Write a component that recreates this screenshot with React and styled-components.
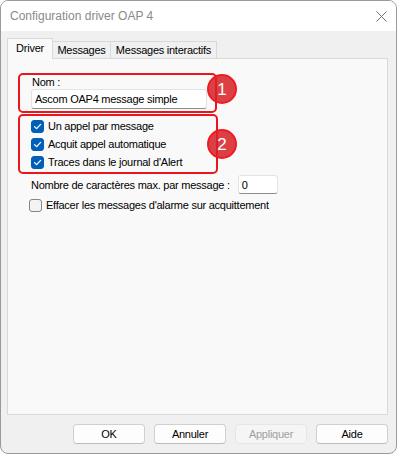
import React from "react";
import styled, { createGlobalStyle } from "styled-components";

const Global = createGlobalStyle`
  html, body { margin: 0; padding: 0; background: #ffffff; }
  body { font-family: "Liberation Sans", Arial, sans-serif; font-size: 11px; letter-spacing: -0.25px; color: #000; }
  * { box-sizing: border-box; }
`;

const Window = styled.div`
  width: 397px;
  height: 454px;
  border: 1px solid #9a9a9a;
  border-radius: 8px;
  overflow: hidden;
  display: flex;
  flex-direction: column;
  background: #f0f0f0;
`;

const TitleBar = styled.div`
  height: 30px;
  background: #ffffff;
  display: flex;
  align-items: center;
  justify-content: space-between;
  padding: 0 9px 0 9px;
`;

const Title = styled.span`
  color: #8a8a8a;
  font-size: 12px;
  letter-spacing: 0;
  padding-bottom: 1px;
`;

const Body = styled.div`
  flex: 1;
  display: flex;
  flex-direction: column;
  padding: 7px 8px 9px 6px;
`;

const TabRow = styled.div`
  display: flex;
  align-items: flex-end;
  height: 20px;
  position: relative;
  z-index: 1;
`;

const Tab = styled.div`
  height: ${(p) => (p.$active ? "21px" : "17px")};
  margin-bottom: ${(p) => (p.$active ? "-1px" : "0")};
  width: ${(p) => p.$w}px;
  margin-left: ${(p) => (p.$first ? "0" : "-1px")};
  border: 1px solid #d9d9d9;
  border-bottom: none;
  background: ${(p) => (p.$active ? "#f9f9f9" : "#f0f0f0")};
  display: flex;
  align-items: ${(p) => (p.$active ? "flex-start" : "center")};
  padding-top: ${(p) => (p.$active ? "3px" : "0")};
  justify-content: center;
  white-space: nowrap;
`;

const Panel = styled.div`
  flex: 1;
  background: #f9f9f9;
  border: 1px solid #d9d9d9;
  display: flex;
  flex-direction: column;
  padding: 14px 0 0 10px;
`;

const Annot = styled.div`
  position: relative;
  width: ${(p) => p.$w}px;
  border: 2px solid #e8171d;
  border-radius: 5px;
  margin-top: ${(p) => p.$mt || 0}px;
  padding: ${(p) => p.$pad};
  display: flex;
  flex-direction: column;
`;

const Badge = styled.div`
  position: absolute;
  left: 187px;
  top: ${(p) => p.$top}px;
  width: 30px;
  height: 30px;
  border-radius: 50%;
  background: rgba(214, 34, 40, 0.86);
  border: 2px solid #ee1c22;
  color: #ffffff;
  font-size: 17px;
  letter-spacing: 0;
  display: flex;
  align-items: center;
  justify-content: center;
  line-height: 1;
`;

const Label = styled.div`
  padding-left: 1px;
  line-height: 13px;
  height: 13px;
`;

const TextBox = styled.div`
  width: ${(p) => p.$w}px;
  height: ${(p) => p.$h}px;
  background: #ffffff;
  border: 1px solid #e3e3e3;
  border-bottom-color: #8e8e8e;
  border-radius: 3px;
  display: flex;
  align-items: center;
  padding-left: 3px;
`;

const CheckRow = styled.div`
  display: flex;
  align-items: center;
  height: 18px;
  padding-left: ${(p) => p.$pl}px;
  margin-top: ${(p) => p.$mt || 0}px;
  gap: ${(p) => p.$gap}px;
`;

const Box = styled.span`
  width: 13px;
  height: 13px;
  border-radius: 3px;
  flex: none;
  display: flex;
  align-items: center;
  justify-content: center;
  background: ${(p) => (p.$checked ? "#005fb8" : "#f3f3f3")};
  border: 1px solid ${(p) => (p.$checked ? "#005fb8" : "#858585")};
`;

const FieldRow = styled.div`
  display: flex;
  align-items: center;
  height: 19px;
  margin-top: 1px;
  padding-left: 13px;
  gap: 8px;
`;

const Footer = styled.div`
  display: flex;
  justify-content: flex-end;
  gap: 9px;
  margin-top: 9px;
  height: 20px;
`;

const Button = styled.div`
  width: 72px;
  height: 20px;
  border-radius: 4px;
  border: 1px solid ${(p) => (p.$disabled ? "#e6e6e6" : "#d0d0d0")};
  border-bottom-color: ${(p) => (p.$disabled ? "#e6e6e6" : "#bcbcbc")};
  background: ${(p) => (p.$disabled ? "#f5f5f5" : "#fdfdfd")};
  color: ${(p) => (p.$disabled ? "#a0a0a0" : "#000")};
  display: flex;
  align-items: center;
  justify-content: center;
`;

const Check = ({ checked, children, pl = 11, gap = 4, mt }) => (
  <CheckRow $pl={pl} $gap={gap} $mt={mt}>
    <Box $checked={checked}>
      {checked && (
        <svg width="9" height="9" viewBox="0 0 9 9">
          <path d="M1.5 4.6 L3.6 6.6 L7.6 2.4" fill="none" stroke="#fff" strokeWidth="1.3" strokeLinecap="round" strokeLinejoin="round" />
        </svg>
      )}
    </Box>
    <span>{children}</span>
  </CheckRow>
);

export default function App() {
  return (
    <>
      <Global />
      <Window>
        <TitleBar>
          <Title>Configuration driver OAP 4</Title>
          <svg width="11" height="11" viewBox="0 0 11 11">
            <path d="M0.5 0.5 L10.5 10.5 M10.5 0.5 L0.5 10.5" stroke="#6e6e6e" strokeWidth="1" />
          </svg>
        </TitleBar>
        <Body>
          <TabRow>
            <Tab $active $first $w={46}>Driver</Tab>
            <Tab $w={59}>Messages</Tab>
            <Tab $w={107}>Messages interactifs</Tab>
          </TabRow>
          <Panel>
            <Annot $w={199} $pad="1px 0 2px 11px">
              <Label>Nom :</Label>
              <TextBox $w={176} $h={20}>Ascom OAP4 message simple</TextBox>
              <Badge $top={-1}>1</Badge>
            </Annot>
            <Annot $w={200} $mt={1} $pad="1px 0 1px 0">
              <Check checked>Un appel par message</Check>
              <Check checked>Acquit appel automatique</Check>
              <Check checked>Traces dans le journal d'Alert</Check>
              <Badge $top={13}>2</Badge>
            </Annot>
            <FieldRow>
              <span>Nombre de caractères max. par message :</span>
              <TextBox $w={40} $h={19}>0</TextBox>
            </FieldRow>
            <Check pl={11} gap={4} mt={2}>Effacer les messages d'alarme sur acquittement</Check>
          </Panel>
          <Footer>
            <Button>OK</Button>
            <Button>Annuler</Button>
            <Button $disabled>Appliquer</Button>
            <Button>Aide</Button>
          </Footer>
        </Body>
      </Window>
    </>
  );
}
